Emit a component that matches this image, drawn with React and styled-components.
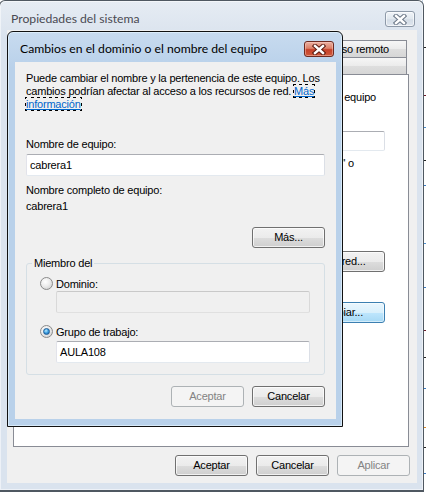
import React from "react";
import styled, { createGlobalStyle, css } from "styled-components";

const UI_FONT = `"Liberation Sans", Arial, sans-serif`;
const TITLE_FONT = `Lato, "Noto Sans", sans-serif`;

const GlobalStyle = createGlobalStyle`
  html, body {
    margin: 0;
    padding: 0;
    background: #fff;
  }
  body {
    font-family: ${UI_FONT};
  }
`;

const Desktop = styled.div`
  position: relative;
  width: 426px;
  height: 492px;
  overflow: hidden;
  background: #fff;
  font-family: ${UI_FONT};
  font-size: 11px;
  letter-spacing: -0.2px;
  color: #000;
`;

// strip of the desktop that peeks out at the right edge
const DesktopEdge = styled.div`
  position: absolute;
  top: 0;
  right: 0;
  width: 3px;
  height: 492px;
  background: #fff;
  border-left: 1px solid #c9d8e8;
`;

const EdgeMark = styled.span`
  position: absolute;
  left: 0;
  top: ${(p) => p.$y}px;
  width: 3px;
  height: 1px;
  background: ${(p) => p.$c};
`;

// a window placed on the desktop canvas
const Window = styled.div`
  position: absolute;
  left: ${(p) => p.$x}px;
  top: ${(p) => p.$y}px;
  width: ${(p) => p.$w}px;
  height: ${(p) => p.$h}px;
  box-sizing: border-box;
  display: flex;
  flex-direction: column;
  padding: 0 6px 7px 7px;
  border: 1px solid ${(p) => (p.$active ? "#111" : "#4f5861")};
  border-bottom-width: ${(p) => (p.$active ? 1 : 2)}px;
  border-radius: 6px 6px 0 0;
  background: ${(p) =>
    p.$active
      ? "linear-gradient(#c8dbef, #b9d1ea 36px)"
      : "linear-gradient(#e6ecf3, #dae3ee 36px)"};
  box-shadow: inset 0 0 0 1px
    ${(p) => (p.$active ? "rgba(230,245,255,0.7)" : "rgba(255,255,255,0.5)")};
`;

const TitleBar = styled.div`
  flex: 0 0 ${(p) => p.$h}px;
  display: flex;
  align-items: flex-start;
  justify-content: space-between;
  padding-left: ${(p) => p.$indent}px;
`;

const TitleText = styled.div`
  margin-top: ${(p) => p.$top}px;
  font-family: ${TITLE_FONT};
  font-size: 12.2px;
  line-height: 15px;
  letter-spacing: 0;
  color: ${(p) => (p.$active ? "#000" : "#4a4a52")};
`;

const CloseButton = styled.div`
  width: 30px;
  height: 16px;
  margin-top: ${(p) => p.$top}px;
  margin-right: 2px;
  box-sizing: border-box;
  border-radius: 3px;
  display: flex;
  align-items: center;
  justify-content: center;
  ${(p) =>
    p.$active
      ? css`
          border: 1px solid #6e2a20;
          background: linear-gradient(#eab1a3 0%, #dc8068 45%, #c64129 55%, #cf5a3c 100%);
          box-shadow: inset 0 0 0 1px rgba(255, 210, 200, 0.45);
        `
      : css`
          border: 1px solid #8d99a8;
          background: linear-gradient(#f0f4f8 0%, #e0e7ee 50%, #d3dce6 55%, #dfe6ee 100%);
          box-shadow: inset 0 0 0 1px rgba(255, 255, 255, 0.6);
        `}
`;

const ClientArea = styled.div`
  flex: 1;
  display: flex;
  flex-direction: column;
  background: #f0f0f0;
  padding: ${(p) => p.$pad};
`;

/* ---------- back window: tabs ---------- */

const TabRow = styled.div`
  display: flex;
  height: 17px;
  margin-right: 2px;
`;

const Tab = styled.div`
  flex: ${(p) => p.$grow};
  box-sizing: border-box;
  border: 1px solid #898c95;
  border-bottom: none;
  margin-left: -1px;
  text-align: center;
  line-height: 16px;
  white-space: nowrap;
  overflow: hidden;
  background: ${(p) =>
    p.$selected ? "#fff" : "linear-gradient(#f6f6f6 0%, #ebebeb 50%, #dedede 51%, #d6d6d6 100%)"};
`;

const TabPanel = styled.div`
  height: 373px;
  box-sizing: border-box;
  border: 1px solid #898c95;
  background: #fff;
  display: flex;
  flex-direction: column;
  align-items: flex-end;
  padding: 16px 23px 0 12px;
`;

const PanelText = styled.div`
  margin-top: ${(p) => p.$mt}px;
  margin-right: ${(p) => p.$inset}px;
  line-height: 13px;
  white-space: nowrap;
`;

const FieldRow = styled.div`
  display: flex;
  align-items: center;
  gap: 8px;
  margin-top: ${(p) => p.$mt}px;
`;

/* ---------- common controls ---------- */

const Button = styled.div`
  width: ${(p) => p.$w || 73}px;
  height: 21px;
  box-sizing: border-box;
  margin-top: ${(p) => p.$mt || 0}px;
  border-radius: 3px;
  display: flex;
  align-items: center;
  justify-content: center;
  line-height: 13px;
  border: 1px solid #707070;
  background: linear-gradient(#f2f2f2 0%, #ebebeb 50%, #dddddd 51%, #cfcfcf 100%);
  box-shadow: inset 0 0 0 1px rgba(255, 255, 255, 0.7);
  color: #000;
  ${(p) =>
    p.$disabled &&
    css`
      border-color: #adb2b5;
      background: #f4f4f4;
      box-shadow: none;
      color: #838383;
    `}
  ${(p) =>
    p.$default &&
    css`
      border-color: #3c7fb1;
      background: linear-gradient(#eaf6fd 0%, #d9f0fc 50%, #bee6fd 51%, #a7d9f5 100%);
      box-shadow: inset 0 0 0 1px rgba(255, 255, 255, 0.5);
    `}
`;

const ButtonRow = styled.div`
  display: flex;
  justify-content: flex-end;
  gap: 8px;
  margin-top: ${(p) => p.$mt}px;
  margin-right: ${(p) => p.$mr || 0}px;
`;

const TextBox = styled.div`
  height: ${(p) => p.$h || 22}px;
  width: ${(p) => (p.$w ? `${p.$w}px` : "auto")};
  box-sizing: border-box;
  margin-top: ${(p) => p.$mt || 0}px;
  margin-left: ${(p) => p.$ml || 0}px;
  padding: 0 3px;
  display: flex;
  align-items: center;
  border: 1px solid;
  border-color: #abadb3 #dbdfe6 #e3e9ef #e2e3ea;
  border-radius: 2px;
  background: ${(p) => (p.$disabled ? "#f0f0f0" : "#fff")};
  ${(p) =>
    p.$disabled &&
    css`
      border-color: #c9c9c9 #d9d9d9 #e0e0e0 #d9d9d9;
    `}
`;

/* ---------- dialog parts ---------- */

const Intro = styled.p`
  margin: 0;
  line-height: 13px;
`;

const Link = styled.a`
  color: #0066cc;
  text-decoration: underline;
  outline: 1px dotted #000;
  outline-offset: 0;
`;

const Label = styled.div`
  margin-top: ${(p) => p.$mt}px;
  line-height: 13px;
`;

const GroupBox = styled.div`
  position: relative;
  margin-top: ${(p) => p.$mt}px;
  border: 1px solid #d5dfe5;
  border-radius: 3px;
  padding: 13px 14px 11px 13px;
  display: flex;
  flex-direction: column;
`;

const Legend = styled.span`
  position: absolute;
  top: -7px;
  left: 5px;
  padding: 0 2px;
  line-height: 13px;
  background: #f0f0f0;
`;

const RadioRow = styled.div`
  display: flex;
  align-items: center;
  gap: 3px;
  height: 13px;
  margin-top: ${(p) => p.$mt || 0}px;
`;

const Radio = styled.span`
  width: 13px;
  height: 13px;
  box-sizing: border-box;
  border-radius: 50%;
  border: 1px solid #8a8a8a;
  background: radial-gradient(circle at 40% 35%, #ffffff 0%, #ececec 45%, #c7c7c7 100%);
  display: flex;
  align-items: center;
  justify-content: center;

  &::after {
    content: "";
    display: ${(p) => (p.$checked ? "block" : "none")};
    width: 7px;
    height: 7px;
    border-radius: 50%;
    box-sizing: border-box;
    border: 1px solid #1f5d96;
    background: radial-gradient(circle at 40% 35%, #b8ecff 0%, #3a9ce0 50%, #135a9c 100%);
  }
`;

const XGlyph = ({ active }) => (
  <svg width="14" height="11" viewBox="0 0 14 11">
    <path
      d="M3 2 L11 9 M11 2 L3 9"
      stroke={active ? "#5a1a10" : "#6a7686"}
      strokeWidth="4.4"
      strokeLinecap="square"
      fill="none"
    />
    <path
      d="M3 2 L11 9 M11 2 L3 9"
      stroke="#fff"
      strokeWidth="2.4"
      strokeLinecap="square"
      fill="none"
    />
  </svg>
);

const edgeMarks = [
  { y: 47, c: "#222" },
  { y: 95, c: "#6b1a2a" },
  { y: 127, c: "#4a8fd0" },
  { y: 160, c: "#222" },
  { y: 185, c: "#3b7cc4" },
  { y: 243, c: "#4a8fd0" },
  { y: 287, c: "#3b7cc4" },
  { y: 330, c: "#6b1a2a" },
  { y: 357, c: "#222" },
  { y: 388, c: "#3b7cc4" },
  { y: 427, c: "#d98a2a" },
  { y: 447, c: "#222" },
  { y: 473, c: "#3b7cc4" },
];

export default function App() {
  return (
    <Desktop>
      <GlobalStyle />

      <DesktopEdge>
        {edgeMarks.map((m) => (
          <EdgeMark key={m.y} $y={m.y} $c={m.c} />
        ))}
      </DesktopEdge>

      <Window $x={-1} $y={0} $w={425} $h={492}>
        <TitleBar $h={29} $indent={4}>
          <TitleText $top={10}>Propiedades del sistema</TitleText>
          <CloseButton $top={10}>
            <XGlyph />
          </CloseButton>
        </TitleBar>
        <ClientArea $pad="10px 8px 0 6px">
          {/* only the right end of the tab strip shows past the dialog */}
          <TabRow>
            <Tab $grow={3} />
            <Tab $grow={3} />
            <Tab $grow={2.2}>Acceso remoto</Tab>
          </TabRow>
          <TabRow>
            <Tab $grow={1} $selected />
            <Tab $grow={1.6} />
          </TabRow>
          <TabPanel>
            <PanelText $mt={0} $inset={9}>
              su equipo
            </PanelText>
            <FieldRow $mt={27}>
              <TextBox $w={200} $h={20} />
            </FieldRow>
            <PanelText $mt={6} $inset={31}>
              cocina" o
            </PanelText>
            <Button $w={92} $mt={81}>
              Id. de red...
            </Button>
            <Button $w={92} $mt={30} $default>
              Cambiar...
            </Button>
          </TabPanel>
          <ButtonRow $mt={8} $mr={-1}>
            <Button>Aceptar</Button>
            <Button>Cancelar</Button>
            <Button $disabled>Aplicar</Button>
          </ButtonRow>
        </ClientArea>
      </Window>

      <Window $x={7} $y={31} $w={336} $h={396} $active>
        <TitleBar $h={30} $indent={5}>
          <TitleText $top={9} $active>
            Cambios en el dominio o el nombre del equipo
          </TitleText>
          <CloseButton $top={9} $active>
            <XGlyph active />
          </CloseButton>
        </TitleBar>
        <ClientArea $pad="10px 11px 11px 11px">
          <Intro>
            {"Puede cambiar el nombre y la pertenencia de este equipo. Los "}
            {"cambios podrían afectar al acceso a los recursos de red. "}
            <Link>
              {"Más"}
              {" "}
              {"información"}
            </Link>
          </Intro>
          <Label $mt={27}>Nombre de equipo:</Label>
          <TextBox $mt={3}>cabrera1</TextBox>
          <Label $mt={8}>Nombre completo de equipo:</Label>
          <Label $mt={3}>cabrera1</Label>
          <ButtonRow $mt={14}>
            <Button>Más...</Button>
          </ButtonRow>
          <GroupBox $mt={15}>
            <Legend>Miembro del</Legend>
            <RadioRow>
              <Radio />
              <span>Dominio:</span>
            </RadioRow>
            <TextBox $mt={1} $ml={16} $disabled />
            <RadioRow $mt={12}>
              <Radio $checked />
              <span>Grupo de trabajo:</span>
            </RadioRow>
            <TextBox $mt={3} $ml={16}>
              AULA108
            </TextBox>
          </GroupBox>
          <ButtonRow $mt={11}>
            <Button $disabled>Aceptar</Button>
            <Button>Cancelar</Button>
          </ButtonRow>
        </ClientArea>
      </Window>
    </Desktop>
  );
}
